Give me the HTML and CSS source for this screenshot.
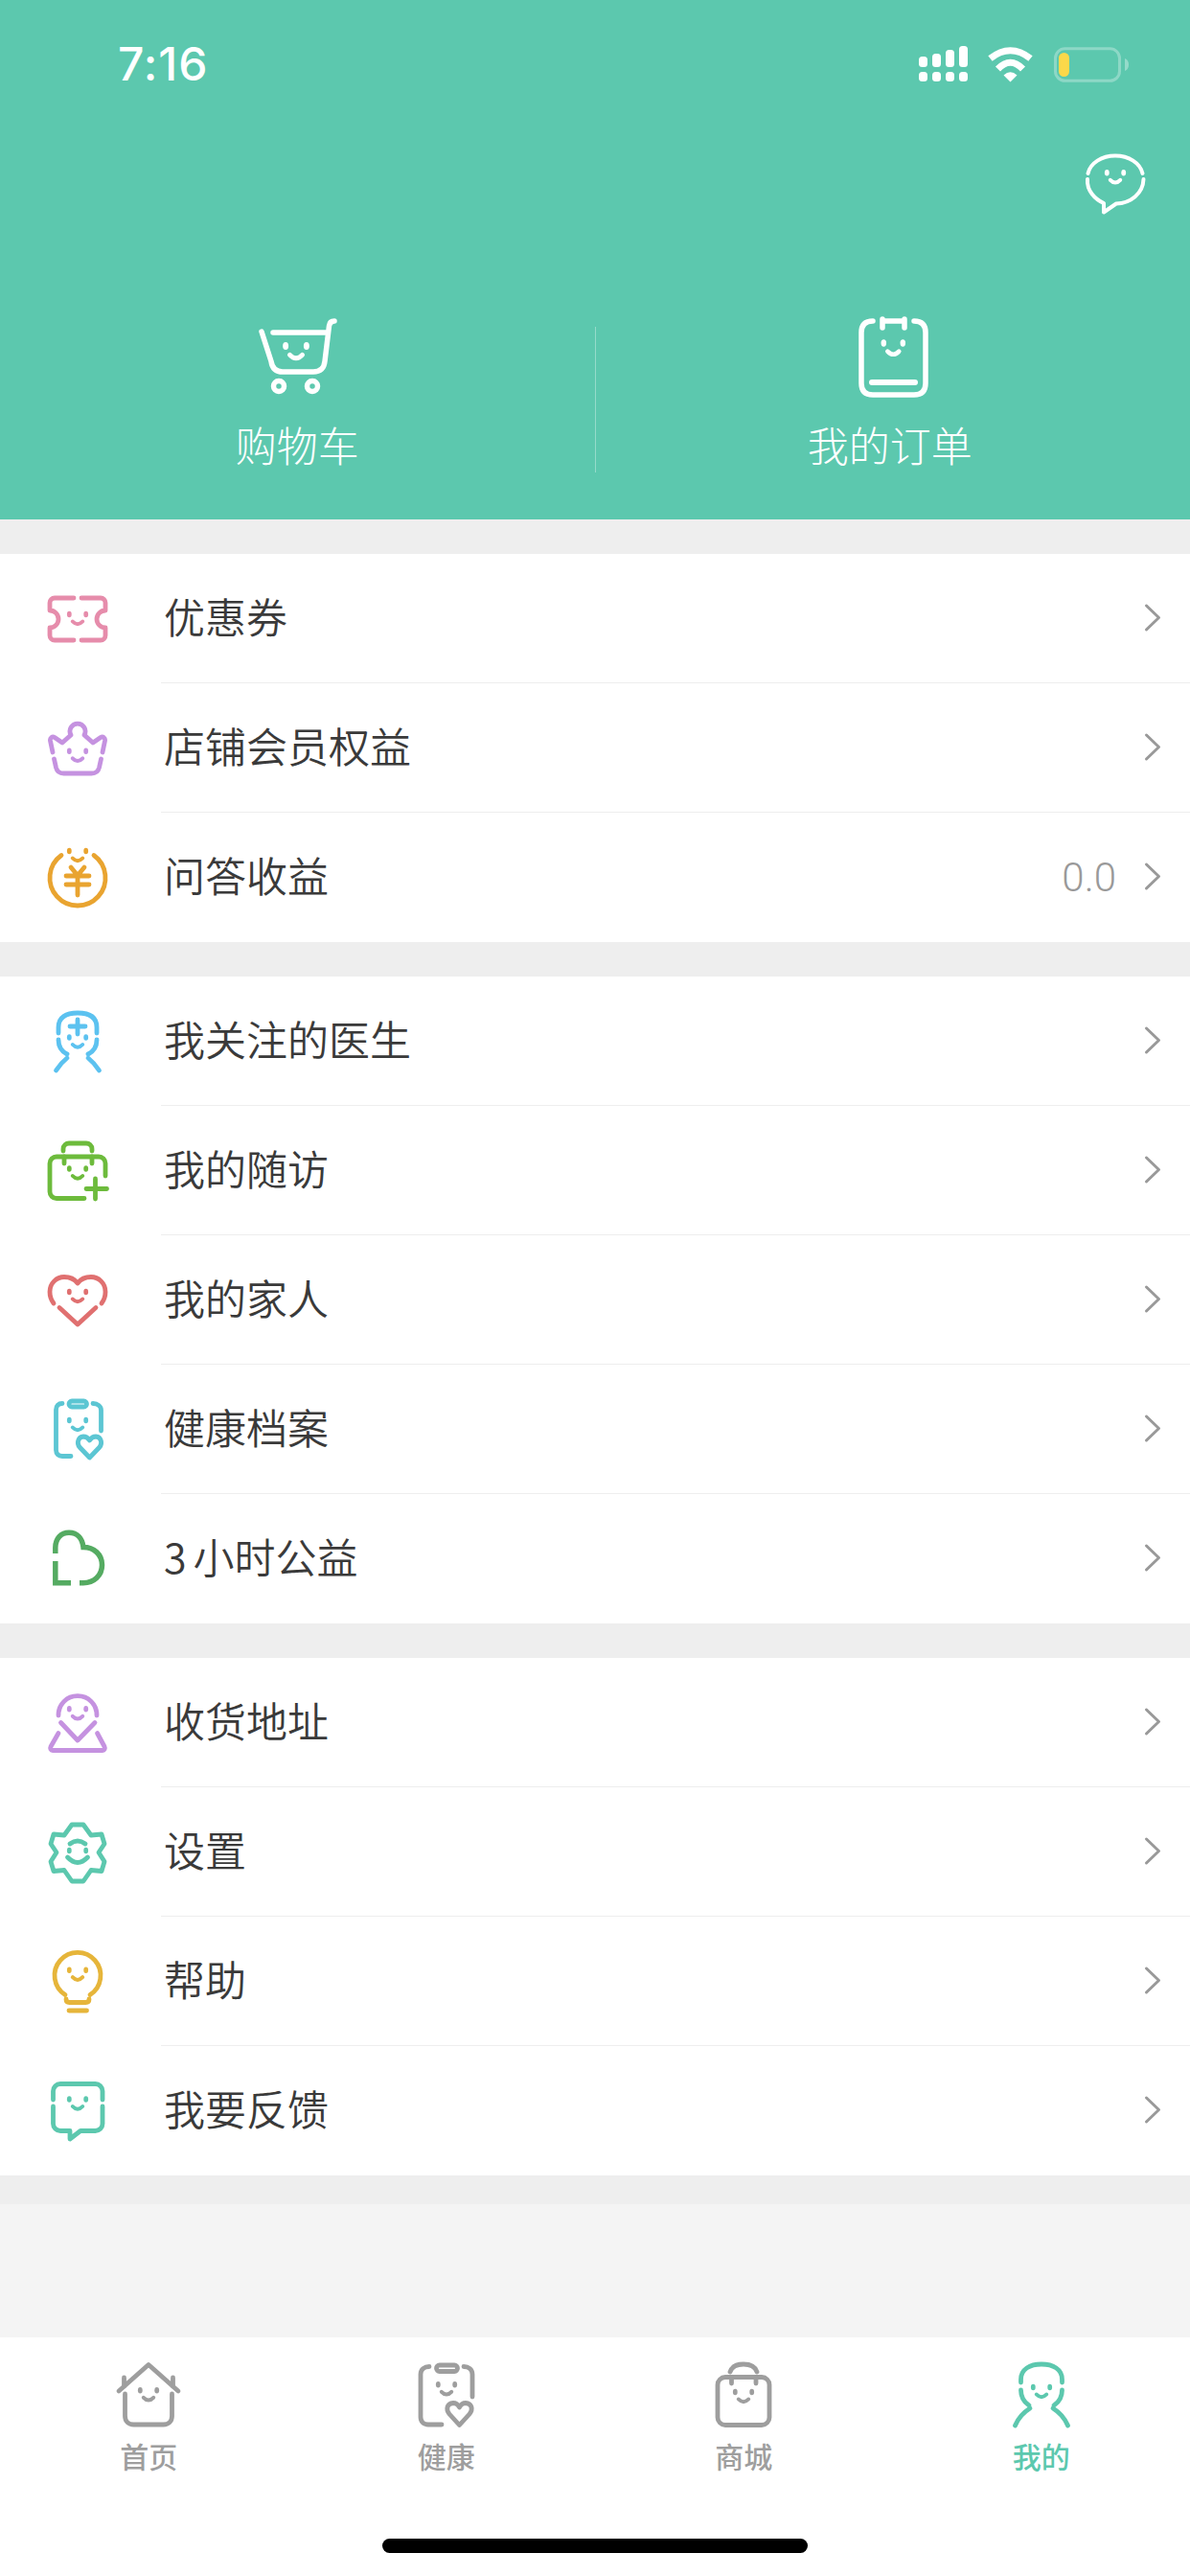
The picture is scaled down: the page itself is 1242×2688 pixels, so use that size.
FILE: index.html
```html
<!DOCTYPE html>
<html lang="zh-CN">
<head>
<meta charset="utf-8">
<title>我的</title>
<link rel="stylesheet" href="styles.css">
</head>
<body>
<svg class="defs" width="0" height="0" aria-hidden="true">
  <defs>
    <g id="f">
      <ellipse class="eye" cx="-8.7" cy="0" rx="2.4" ry="3.2"/>
      <ellipse class="eye" cx="8.7" cy="0" rx="2.4" ry="3.2"/>
      <path class="smile" d="M-5.200 7.500q5.200 5.500 10.400 0"/>
    </g>
    <g id="eyes">
      <ellipse class="eye" cx="-8.7" cy="0" rx="2.4" ry="3.2"/>
      <ellipse class="eye" cx="8.7" cy="0" rx="2.4" ry="3.2"/>
    </g>
    <g id="chev"><path d="M3.500 3L16.500 15.500L3.500 28"/></g>
  </defs>
</svg>
<div class="app">
  <header class="head">
    <div class="status">
      <span class="time">7:16</span>
      <svg class="status-icons" width="230" height="46" viewBox="0 0 230 46">
        <g class="wh">
          <rect x="8" y="15" width="9" height="11" rx="3.500"/><rect x="22" y="12" width="9" height="14" rx="3.500"/>
          <rect x="36" y="8" width="9" height="18" rx="3.500"/><rect x="50" y="4" width="9" height="22" rx="3.500"/>
          <rect x="8" y="31" width="9" height="10" rx="3.500"/><rect x="22" y="31" width="9" height="10" rx="3.500"/>
          <rect x="36" y="31" width="9" height="10" rx="3.500"/><rect x="50" y="31" width="9" height="10" rx="3.500"/>
          <path d="M96.500 34.500Q103.500 28 110.500 34.500L103.500 41.500Z"/>
        </g>
        <path class="wifi" d="M82.500 17Q103.500 0.500 124.500 17"/>
        <path class="wifi" d="M90.500 28Q103.500 14.600 116.500 28"/>
        <rect class="batt" x="150.500" y="6.800" width="67" height="33.500" rx="10"/>
        <rect class="batt-fill" x="154" y="11" width="11" height="25" rx="5.500"/>
        <path class="batt-nub" d="M223 17c3 1 4 4 4 6.500s-1 5.500-4 6.500z"/>
      </svg>
    </div>
    <div class="head-tool">
      <svg class="ico ico-w" width="72" height="72" viewBox="0 0 72 72">
        <path d="M7.500 25C10 14 22 6.500 36 6.500S62 14 64.500 25"/>
        <path d="M7 31C6 43 15 52 24 56L24 65.500L37 56.500C52 56 65 46 65.500 31"/>
        <use href="#f" x="36" y="24.300"/>
      </svg>
    </div>
    <div class="quick">
      <a class="quick-item">
        <svg class="ico ico-h" width="96" height="96" viewBox="0 0 96 96">
          <path d="M87 10c-3 0-5 1-5.500 5L77 52c-.7 7-4 11-12 11H33c-7 0-11-4-12-11L11 21"/>
          <path d="M23 22H78"/>
          <circle cx="29" cy="78" r="5.500"/><circle cx="64" cy="78" r="5.500"/>
          <use href="#f" transform="translate(47 36) scale(1.250)"/>
        </svg>
        <span class="quick-label">购物车</span>
      </a>
      <a class="quick-item quick-second">
        <svg class="ico ico-h" width="96" height="96" viewBox="0 0 96 96">
          <path d="M27 10c-8 0-12 4-12 12V75c0 8 4 12 12 12H70c8 0 12-4 12-12V22c0-8-4-12-12-12"/>
          <path d="M37 8V17M60 8V17M37 10H60"/>
          <path class="thick" d="M26 74H71"/>
          <use href="#f" transform="translate(48.300 33) scale(1.150)"/>
        </svg>
        <span class="quick-label">我的订单</span>
      </a>
    </div>
  </header>

  <main class="main">
    <div class="groups">
      <section class="group">
        <a class="row">
          <svg class="ico c-pink" width="72" height="72" viewBox="0 0 72 72">
            <path d="M32 14H12a5 5 0 0 0-5 5v8a9 9 0 0 1 0 18v8a5 5 0 0 0 5 5H32"/>
            <path d="M40 14H60a5 5 0 0 1 5 5v8a9 9 0 0 0 0 18v8a5 5 0 0 1-5 5H40"/>
            <use href="#f" x="36" y="31"/>
          </svg>
          <div class="row-body"><span class="row-text">优惠券</span><svg class="chev" width="20" height="31" viewBox="0 0 20 31"><use href="#chev"/></svg></div>
        </a>
        <a class="row">
          <svg class="ico c-purple" width="72" height="72" viewBox="0 0 72 72">
            <path d="M10 40L7.500 28c-.5-3 2-5 4.500-3.500L20 30L29 22a8 8 0 1 1 14 0L52 30L60 24.500c2.500-1.500 5 .5 4.500 3.500L62 40"/>
            <path d="M11.500 47l2 9c1 4 4 6 8 6h29c4 0 7-2 8-6l2-9"/>
            <use href="#f" x="36" y="38.800"/>
          </svg>
          <div class="row-body"><span class="row-text">店铺会员权益</span><svg class="chev" width="20" height="31" viewBox="0 0 20 31"><use href="#chev"/></svg></div>
        </a>
        <a class="row">
          <svg class="ico c-orange" width="72" height="72" viewBox="0 0 72 72">
            <path d="M19 12.500A29 29 0 1 0 53 12.500"/>
            <path d="M29 25L36 33.500L43 25M24 34H48M24 43H48M36 34V54"/>
            <use href="#f" x="36" y="8"/>
          </svg>
          <div class="row-body"><span class="row-text">问答收益</span><span class="row-val">0.0</span><svg class="chev" width="20" height="31" viewBox="0 0 20 31"><use href="#chev"/></svg></div>
        </a>
      </section>

      <section class="group">
        <a class="row">
          <svg class="ico c-blue" width="72" height="72" viewBox="0 0 72 72">
            <path d="M16 27V21C16 10 24 6 36 6S56 10 56 21V27"/>
            <path d="M28 20H44M36 13V28"/>
            <path d="M16 34C16 41 19 46 25 49M25 53C20 57 16 62 13.500 66M56 34C56 41 53 46 47 49M47 53C52 57 56 62 58.500 66"/>
            <use href="#f" x="36" y="31.500"/>
          </svg>
          <div class="row-body"><span class="row-text">我关注的医生</span><svg class="chev" width="20" height="31" viewBox="0 0 20 31"><use href="#chev"/></svg></div>
        </a>
        <a class="row">
          <svg class="ico c-green" width="72" height="72" viewBox="0 0 72 72">
            <path d="M21 15V13c0-4 3-6 6-6H45c3 0 6 2 6 6V15"/>
            <path d="M43 64.500H14a7 7 0 0 1-7-7V28a7 7 0 0 1 7-7H58a7 7 0 0 1 7 7V41"/>
            <path d="M22 21V28M51 21V28M45 54.500H66.500M54.500 44V65"/>
            <use href="#f" x="36" y="33.500"/>
          </svg>
          <div class="row-body"><span class="row-text">我的随访</span><svg class="chev" width="20" height="31" viewBox="0 0 20 31"><use href="#chev"/></svg></div>
        </a>
        <a class="row">
          <svg class="ico c-red" width="72" height="72" viewBox="0 0 72 72">
            <path d="M11 39C8 35 7 31.500 7 27C7 18 14 11.500 22 11.500C28 11.500 33 14 36 18C39 14 44 11.500 50 11.500C58 11.500 65 18 65 27C65 31.500 64 35 61 39"/>
            <path d="M17 43.500L36 61L55 43.500"/>
            <use href="#f" x="36" y="27"/>
          </svg>
          <div class="row-body"><span class="row-text">我的家人</span><svg class="chev" width="20" height="31" viewBox="0 0 20 31"><use href="#chev"/></svg></div>
        </a>
        <a class="row">
          <svg class="ico c-cyan" width="72" height="72" viewBox="0 0 72 72">
            <rect x="27" y="6" width="18.500" height="6" rx="3"/>
            <path d="M20 8.500c-4 0-6.500 2.500-6.500 6.500V57c0 4 2.500 6.500 6.500 6.500H29"/>
            <path d="M52 8.500c5 0 8.500 3 8.500 7V37"/>
            <path d="M48.500 65L38 54C35 50.500 36 43.500 42 43C45 43 47 44.500 48.500 47C50 44.500 52 43 55 43C61 43.500 62 50.500 59 54Z"/>
            <use href="#f" x="36" y="26"/>
          </svg>
          <div class="row-body"><span class="row-text">健康档案</span><svg class="chev" width="20" height="31" viewBox="0 0 20 31"><use href="#chev"/></svg></div>
        </a>
        <a class="row">
          <svg class="ico ico-heart c-leaf" width="72" height="72" viewBox="0 0 72 72">
            <path d="M12.800 30V24C12.800 14 19 8.200 27 8.200C36 8.200 41 15 42 23.500C53 23.500 61.500 31 61.500 42C61.500 53 53 60.700 42 60.700H38"/>
            <path d="M12.800 38V60.700H29"/>
          </svg>
          <div class="row-body"><span class="row-text"><span class="digit">3</span>小时公益</span><svg class="chev" width="20" height="31" viewBox="0 0 20 31"><use href="#chev"/></svg></div>
        </a>
      </section>

      <section class="group">
        <a class="row">
          <svg class="ico c-purple" width="72" height="72" viewBox="0 0 72 72">
            <path d="M16 28C16 16 25 7.700 36 7.700S56 16 56 28"/>
            <path d="M18.500 35.500L36 54L54 35.500"/>
            <path d="M16 46.500L8 60.500C7 62.500 8 64.500 10 64.500H62C64 64.500 65 62.500 64 60.500L56.500 46.500"/>
            <use href="#f" x="36" y="21.300"/>
          </svg>
          <div class="row-body"><span class="row-text">收货地址</span><svg class="chev" width="20" height="31" viewBox="0 0 20 31"><use href="#chev"/></svg></div>
        </a>
        <a class="row">
          <svg class="ico c-teal" width="72" height="72" viewBox="0 0 72 72">
            <path d="M30 7H42L50 18L61 17L64 27L58 36L64 45.500L61 55.500L50 54.500L42 66H30L22 54.500L11 55.500L8 45.500L14 36L8 27L11 17L22 18Z"/>
            <path d="M28 27Q36 21 44 27"/>
            <path d="M25.500 41Q36 52 46.500 41"/>
            <use href="#eyes" x="36" y="34"/>
          </svg>
          <div class="row-body"><span class="row-text">设置</span><svg class="chev" width="20" height="31" viewBox="0 0 20 31"><use href="#chev"/></svg></div>
        </a>
        <a class="row">
          <svg class="ico c-yellow" width="72" height="72" viewBox="0 0 72 72">
            <path d="M23 49.500A24 24 0 1 1 49 49.500"/>
            <path d="M24 54q0 3.500 3.500 3.500h17q3.500 0 3.500-3.500"/>
            <path d="M27 66H45.500"/>
            <use href="#f" x="36" y="23.700"/>
          </svg>
          <div class="row-body"><span class="row-text">帮助</span><svg class="chev" width="20" height="31" viewBox="0 0 20 31"><use href="#chev"/></svg></div>
        </a>
        <a class="row">
          <svg class="ico c-teal" width="72" height="72" viewBox="0 0 72 72">
            <path d="M10.500 24V15a7.500 7.500 0 0 1 7.500-7.500H54.500a7.500 7.500 0 0 1 7.500 7.500V24"/>
            <path d="M10.500 31V49a7.500 7.500 0 0 0 7.500 7.500H28V65L39 56.500H54.500a7.500 7.500 0 0 0 7.500-7.500V31"/>
            <use href="#f" x="36" y="23.500"/>
          </svg>
          <div class="row-body"><span class="row-text">我要反馈</span><svg class="chev" width="20" height="31" viewBox="0 0 20 31"><use href="#chev"/></svg></div>
        </a>
      </section>
    </div>
  </main>

  <nav class="tabs">
    <a class="tab">
      <svg class="ico c-gray" width="72" height="72" viewBox="0 0 72 72">
        <path d="M5 32L36 4.500L67 32"/>
        <path d="M10.500 18V27M61.500 18V27"/>
        <path d="M11.500 35V58c0 5.500 3.500 9 9 9H51.500c5.500 0 9-3.500 9-9V35"/>
        <use href="#f" x="36" y="31.300"/>
      </svg>
      <span class="tab-label">首页</span>
    </a>
    <a class="tab">
      <svg class="ico c-gray" width="72" height="72" viewBox="0 0 72 72">
        <rect x="25.500" y="5" width="22" height="6.500" rx="3.200"/>
        <path d="M18 6.500c-5 0-9 3-9 8V59c0 5 3 8 8 8H31"/>
        <path d="M54 6.500c5 0 9 3 9 8V38"/>
        <path d="M49.500 67.500L39 56C35 51 36.500 45 43 44.500C46 44.500 48 46 49.500 49C51 46 53 44.500 56 44.500C62.500 45 64 51 60 56Z"/>
        <use href="#f" x="36" y="25.300"/>
      </svg>
      <span class="tab-label">健康</span>
    </a>
    <a class="tab">
      <svg class="ico c-gray" width="72" height="72" viewBox="0 0 72 72">
        <path d="M22 12C24 6 29 4 36 4S48 6 50 12"/>
        <rect x="9" y="17.500" width="54" height="50" rx="8"/>
        <path d="M23.500 18V24M49 18V24"/>
        <use href="#f" x="36" y="33"/>
      </svg>
      <span class="tab-label">商城</span>
    </a>
    <a class="tab tab-on">
      <svg class="ico c-teal" width="72" height="72" viewBox="0 0 72 72">
        <path d="M14.500 23V20C14.500 9 24 4 36 4S57.500 9 57.500 20V23"/>
        <path d="M14.500 31C14.500 38 17 43 23 47M24 50C16 55 11 62 8.500 68M57.500 31C57.500 38 55 43 49 47M48 50C56 55 61 62 63.500 68"/>
        <use href="#f" x="36" y="28"/>
      </svg>
      <span class="tab-label">我的</span>
    </a>
    <div class="home-bar"></div>
  </nav>
</div>
</body>
</html>
```

FILE: styles.css
```css
* { box-sizing: border-box; }
html, body { margin: 0; padding: 0; }
body {
  width: 1242px;
  height: 2688px;
  overflow: hidden;
  background: #f4f4f4;
  font-family: "Noto Sans CJK SC", sans-serif;
}
a { color: inherit; text-decoration: none; }
.defs { position: absolute; }
.app { display: flex; flex-direction: column; height: 2688px; }

/* header */
.head { height: 542px; background: #5cc8ae; color: #fff; display: flex; flex-direction: column; flex: none; }
.status { height: 156px; display: flex; justify-content: space-between; align-items: flex-start; padding: 44px 61px 0 123px; }
.time { font-family: Inter, "Liberation Sans", sans-serif; font-weight: 500; font-size: 48px; line-height: 46px; letter-spacing: 1px; }
.status-icons { display: block; }
.wh { fill: #fff; }
.wifi { fill: none; stroke: #fff; stroke-width: 7; }
.batt { fill: none; stroke: rgba(255,255,255,.3); stroke-width: 3; }
.batt-fill { fill: #fbd84a; }
.batt-nub { fill: rgba(255,255,255,.35); }
.head-tool { height: 169px; display: flex; justify-content: flex-end; padding-right: 42px; flex: none; }
.quick { display: flex; flex: none; height: 152px; }
.quick-item { flex: 1; display: flex; flex-direction: column; align-items: center; }
.quick-second { border-left: 1px solid rgba(255,255,255,.35); margin-top: 16px; height: 152px; }
.quick-second .ico-h { margin-top: -16px; }
.quick-label { font-size: 43px; line-height: 60px; font-weight: 300; margin-top: 12px; }
.quick-second .quick-label { margin-right: 6px; }

/* icons */
.ico { display: block; flex: none; fill: none; stroke: currentColor; stroke-width: 4.800; stroke-linecap: round; stroke-linejoin: round; }
.ico-w { color: #fff; stroke-width: 4; }
.ico-h { color: #fff; stroke-width: 5.500; }
.ico-h .thick { stroke-width: 6; }
.ico-heart { stroke-width: 5.500; stroke-linecap: butt; stroke-linejoin: miter; }
.eye { fill: currentColor; stroke: none; }
.smile { stroke-width: 4; }
.c-pink { color: #e68cab; }
.c-purple { color: #c592e0; }
.c-orange { color: #e9a430; }
.c-blue { color: #5cc2f0; }
.c-green { color: #6dbb3c; }
.c-red { color: #e07070; }
.c-cyan { color: #5cc6d3; }
.c-leaf { color: #55ab62; }
.c-teal { color: #5cc8ae; }
.c-yellow { color: #e6b53a; }
.c-gray { color: #9e9e9e; }

/* list */
.main { flex: 1; background: #f4f4f4; }
.groups { background: #eeeeee; padding: 36px 0 30px; display: flex; flex-direction: column; gap: 36px; }
.group { background: #fff; }
.row { display: flex; align-items: center; height: 135px; padding-left: 45px; }
.row-body { flex: 1; height: 135px; margin-left: 51px; display: flex; align-items: center; padding: 0 29px 0 3px; border-bottom: 1px solid #eeeeee; }
.row:last-child .row-body { border-bottom: 0; }
.row-text { flex: 1; font-size: 43px; line-height: 60px; color: #3a3a3a; font-weight: 350; margin-bottom: 7px; }
.digit { letter-spacing: 7px; }
.row-val { font-family: Roboto, "Liberation Sans", sans-serif; font-weight: 300; font-size: 42px; color: #999; margin-right: 28px; }
.chev { display: block; margin-bottom: 2px; fill: none; stroke: #999; stroke-width: 3; stroke-linecap: round; stroke-linejoin: round; }

/* tabs */
.tabs { position: relative; height: 249px; flex: none; background: #fff; display: flex; padding-top: 24px; }
.tab { flex: 1; display: flex; flex-direction: column; align-items: center; color: #9e9e9e; }
.tab-on { color: #5cc8ae; }
.tab-label { font-size: 30px; line-height: 40px; font-weight: 500; margin-top: 7px; }
.home-bar { position: absolute; left: 399px; top: 210px; width: 444px; height: 15px; border-radius: 8px; background: #000; }
```
